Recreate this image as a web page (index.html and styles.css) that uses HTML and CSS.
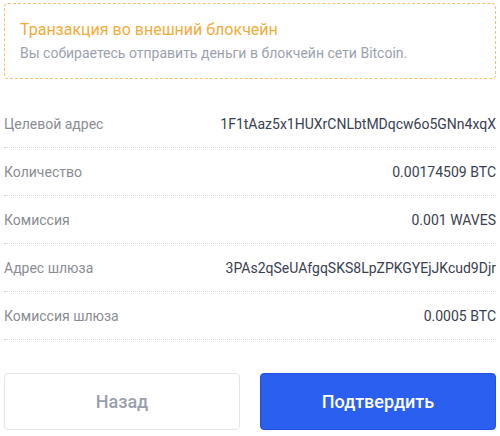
FILE: index.html
```html
<!DOCTYPE html>
<html lang="ru">
<head>
<meta charset="utf-8">
<link rel="stylesheet" href="styles.css">
</head>
<body>
<div class="page">
  <div class="notice">
    <div class="notice-title">Транзакция во внешний блокчейн</div>
    <div class="notice-text">Вы собираетесь отправить деньги в блокчейн сети Bitcoin.</div>
  </div>
  <div class="rows">
    <div class="row"><span class="label">Целевой адрес</span><span class="value">1F1tAaz5x1HUXrCNLbtMDqcw6o5GNn4xqX</span></div>
    <div class="row"><span class="label">Количество</span><span class="value">0.00174509 BTC</span></div>
    <div class="row"><span class="label">Комиссия</span><span class="value">0.001 WAVES</span></div>
    <div class="row"><span class="label">Адрес шлюза</span><span class="value">3PAs2qSeUAfgqSKS8LpZPKGYEjJKcud9Djr</span></div>
    <div class="row"><span class="label">Комиссия шлюза</span><span class="value">0.0005 BTC</span></div>
  </div>
  <div class="actions">
    <button class="btn btn-back">Назад</button>
    <button class="btn btn-confirm">Подтвердить</button>
  </div>
</div>
</body>
</html>
```
FILE: styles.css
```css
html, body {
  margin: 0;
  padding: 0;
  background: #ffffff;
}
body {
  font-family: Roboto, "Noto Sans", sans-serif;
}
.page {
  padding: 3px 4px 0 4px;
  display: flex;
  flex-direction: column;
}
.notice {
  border: 1px dashed #f3c16f;
  border-radius: 4px;
  padding: 15px 15px 13px 15px;
  height: 76px;
  box-sizing: border-box;
}
.notice-title {
  color: #efac3c;
  font-size: 16px;
  line-height: 22px;
}
.notice-text {
  color: #9ba2ad;
  font-size: 14px;
  line-height: 20px;
  margin-top: 2px;
}
.rows {
  margin-top: 21px;
  display: flex;
  flex-direction: column;
}
.row {
  display: flex;
  justify-content: space-between;
  align-items: center;
  height: 48px;
  border-bottom: 1px dotted #d3d6db;
  box-sizing: border-box;
  font-size: 14px;
}
.label {
  color: #8a8d93;
}
.value {
  color: #3a4150;
  text-align: right;
}
.actions {
  margin-top: 33px;
  display: grid;
  grid-template-columns: 1fr 1fr;
  gap: 20px;
}
.btn {
  height: 57px;
  border-radius: 4px;
  font-family: Roboto, "Noto Sans", sans-serif;
  font-size: 18px;
  font-weight: 500;
  cursor: pointer;
}
.btn-back {
  background: #ffffff;
  border: 1px solid #e2e5ea;
  color: #9aa1ab;
}
.btn-confirm {
  background: #2a5ff0;
  border: 1px solid #1f50dd;
  color: #ffffff;
}
```
